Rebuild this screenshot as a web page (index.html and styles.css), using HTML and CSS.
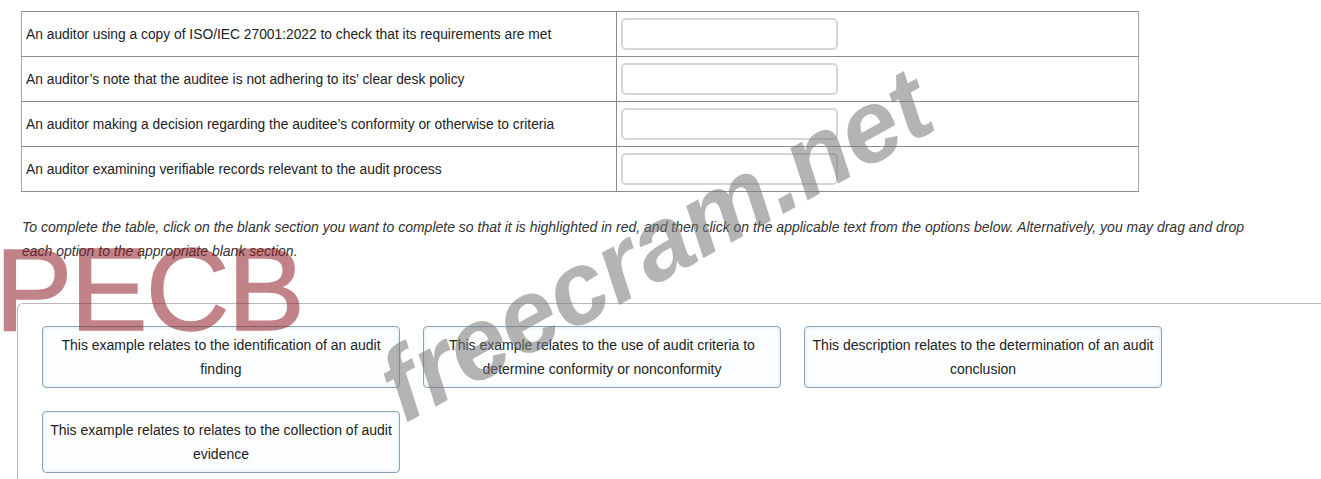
FILE: index.html
```html
<!DOCTYPE html>
<html lang="en">
<head>
    <meta charset="UTF-8">
    <meta name="viewport" content="width=device-width, initial-scale=1.0">
    <title>Audit Drag and Drop</title>
    <link rel="stylesheet" href="styles.css">
</head>
<body>
    <div class="page">
        <table class="match-table">
            <tr>
                <td class="statement">An auditor using a copy of ISO/IEC 27001:2022 to check that its requirements are met</td>
                <td class="answer"><div class="drop-slot"></div></td>
            </tr>
            <tr>
                <td class="statement">An auditor’s note that the auditee is not adhering to its’ clear desk policy</td>
                <td class="answer"><div class="drop-slot"></div></td>
            </tr>
            <tr>
                <td class="statement">An auditor making a decision regarding the auditee’s conformity or otherwise to criteria</td>
                <td class="answer"><div class="drop-slot"></div></td>
            </tr>
            <tr>
                <td class="statement">An auditor examining verifiable records relevant to the audit process</td>
                <td class="answer"><div class="drop-slot"></div></td>
            </tr>
        </table>

        <p class="instructions">To complete the table, click on the blank section you want to complete so that it is highlighted in red, and then click on the applicable text from the options below. Alternatively, you may drag and drop each option to the appropriate blank section.</p>

        <div class="options-panel">
            <div class="option">This example relates to the identification of an audit finding</div>
            <div class="option">This example relates to the use of audit criteria to determine conformity or nonconformity</div>
            <div class="option">This description relates to the determination of an audit conclusion</div>
            <div class="option">This example relates to relates to the collection of audit evidence</div>
        </div>

        <div class="mark-pecb">PECB</div>
        <div class="mark-site">freecram.net</div>
    </div>
</body>
</html>
```

FILE: styles.css
```css
html {
    overflow: hidden;
}
body {
    margin: 0;
    padding: 0;
    background-color: #fff;
    font-family: "Liberation Sans", Arial, sans-serif;
    color: #222;
}
.page {
    position: relative;
    padding: 11px 0 0 21px;
    height: 468px;
}
.match-table {
    width: 1118px;
    border-collapse: collapse;
    border: 1px solid #a6a6a6;
}
.match-table td {
    height: 44px;
    padding: 0;
    border-top: 1px solid #8c8c8c;
    border-bottom: 1px solid #8c8c8c;
    vertical-align: middle;
}
.statement {
    width: 590px;
    padding-left: 4px !important;
    font-size: 13.8px;
    border-right: 1px solid #8c8c8c;
}
.answer {
    padding-left: 4px !important;
}
.drop-slot {
    width: 213px;
    height: 28px;
    border: 2px solid #d6d6d6;
    border-radius: 5px;
}
.instructions {
    margin: 23px 0 0 1px;
    width: 1240px;
    font-size: 14px;
    font-style: italic;
    line-height: 24px;
    color: #333;
}
.options-panel {
    display: flex;
    flex-wrap: wrap;
    gap: 23px;
    margin: 40px 0 0 -4px;
    padding: 22px 0 60px 24px;
    border-top: 1px solid #b9b9b9;
    border-left: 1px solid #b9b9b9;
    border-top-left-radius: 6px;
    width: 1290px;
}
.option {
    box-sizing: border-box;
    width: 358px;
    height: 62px;
    padding: 6px 3px;
    border: 1px solid #8ea3b6;
    border-radius: 4px;
    background-color: #fdfeff;
    box-shadow: inset 0 0 4px #cfe7f4;
    text-align: center;
    font-size: 14px;
    line-height: 24px;
    color: #222;
}
/* watermarks lie over the page */
.mark-pecb {
    position: absolute;
    left: -5px;
    top: 232px;
    font-family: "Liberation Sans", Arial, sans-serif;
    font-size: 116px;
    line-height: 1;
    letter-spacing: -2px;
    color: rgb(144, 31, 40);
    -webkit-text-stroke: 1.5px rgb(144, 31, 40);
    opacity: 0.55;
    pointer-events: none;
}
.mark-site {
    position: absolute;
    left: 340px;
    top: 193px;
    width: 630px;
    text-align: center;
    font-family: "Liberation Sans", Arial, sans-serif;
    font-size: 102px;
    font-weight: bold;
    font-style: italic;
    line-height: 104px;
    color: rgb(119, 119, 119);
    opacity: 0.55;
    transform: rotate(-29deg);
    transform-origin: 50% 50%;
    pointer-events: none;
}
```
